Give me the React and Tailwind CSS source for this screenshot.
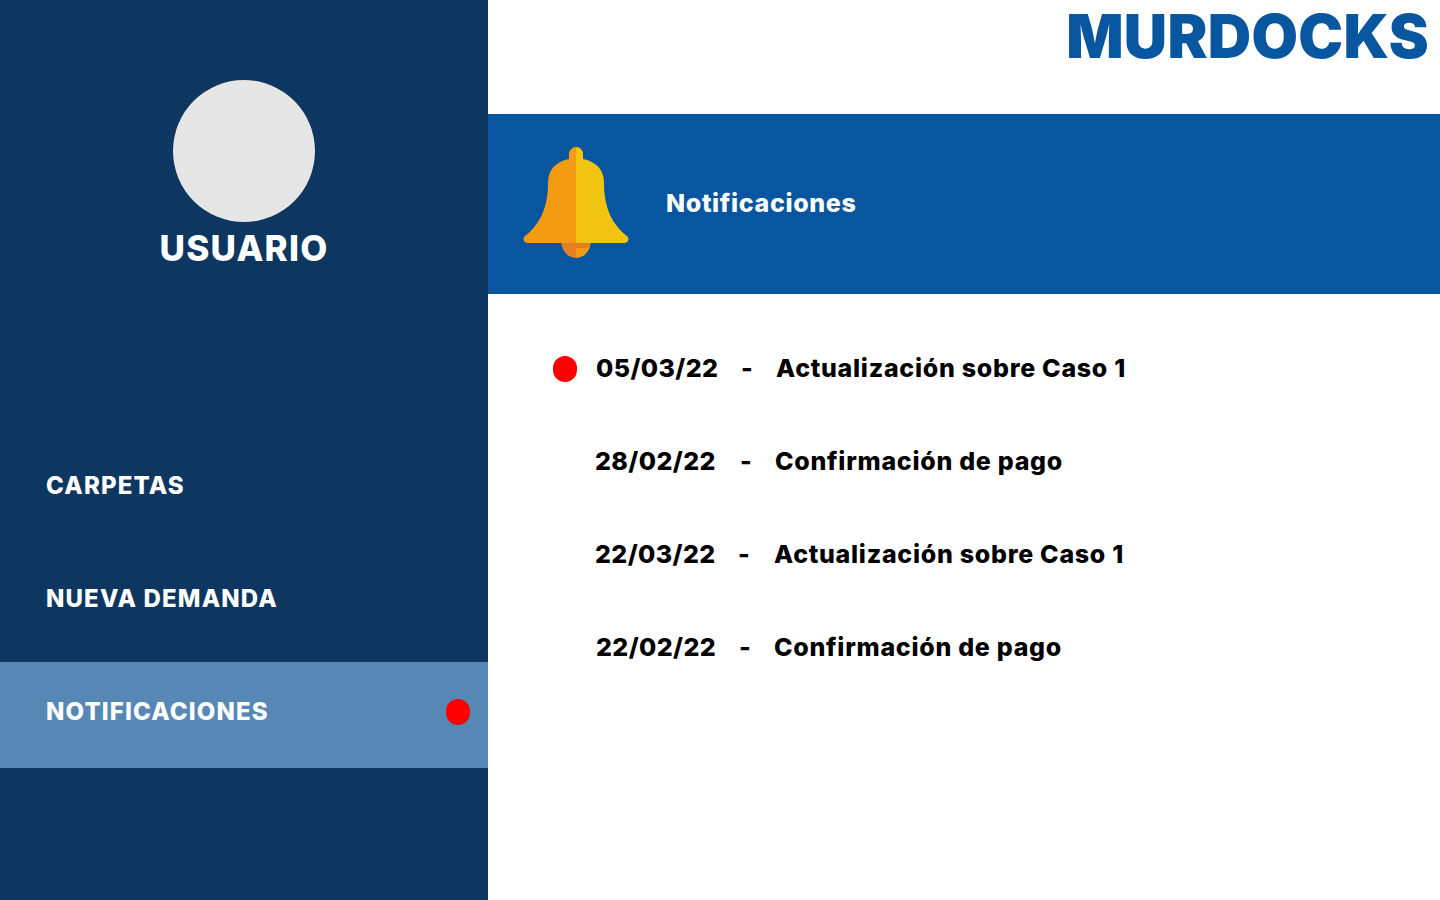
const menuItems = [
  { label: 'CARPETAS' },
  { label: 'NUEVA DEMANDA' },
  { label: 'NOTIFICACIONES', active: true, unread: true },
]

const notifications = [
  { date: '05/03/22', title: 'Actualización sobre Caso 1', unread: true, dotCol: 'w-[43px]', dateCol: 'w-[145px]', dashCol: 'w-[35px]' },
  { date: '28/02/22', title: 'Confirmación de pago', dotCol: 'w-[42px]', dateCol: 'w-[145px]', dashCol: 'w-[35px]' },
  { date: '22/03/22', title: 'Actualización sobre Caso 1', dotCol: 'w-[42px]', dateCol: 'w-[143px]', dashCol: 'w-[36px]' },
  { date: '22/02/22', title: 'Confirmación de pago', dotCol: 'w-[43px]', dateCol: 'w-[143px]', dashCol: 'w-[35px]' },
]

function Bell() {
  return (
    <svg width="106" height="112" viewBox="0 0 106 112" className="mb-[2px] shrink-0">
      <path d="M38 92 a15 18 0 0 0 15 19 V92 Z" fill="#e67e22" />
      <path d="M53 92 V111 a15 18 0 0 0 15 -19 Z" fill="#f39c12" />
      <rect x="53" y="94" width="14" height="7" fill="#e67e22" />
      <path d="M53 0 a7 7 0 0 0 -7 8 V12 C32 15 25 23 25 36 C25 62 16 78 2 89 C-1 92 1 96 5 96 H53 Z" fill="#f39c12" />
      <path d="M53 0 a7 7 0 0 1 7 8 V12 C74 15 81 23 81 36 C81 62 90 78 104 89 C107 92 105 96 101 96 H53 Z" fill="#f1c40f" />
    </svg>
  )
}

export default function App() {
  return (
    <div className="flex h-[900px] w-[1440px] overflow-hidden bg-white font-['Inter',sans-serif]">
      {/* Sidebar */}
      <aside className="flex w-[488px] shrink-0 flex-col bg-[#0d3660] text-white">
        <div className="flex flex-col items-center pt-[80px]">
          <div className="h-[142px] w-[142px] rounded-full bg-[#e6e6e6]" />
          <h1 className="mt-[6px] text-[35px] font-extrabold leading-[40px] tracking-[1.2px]">USUARIO</h1>
        </div>
        <nav className="mt-[168px] flex flex-col gap-[7px]">
          {menuItems.map((item) => (
            <div
              key={item.label}
              className={`flex h-[106px] items-center justify-between pb-[6px] pl-[46px] pr-[18px] text-[24px] font-extrabold tracking-[1.15px] ${item.active ? 'bg-[#5788b5]' : ''}`}
            >
              <span>{item.label}</span>
              {item.unread && <span className="h-[26px] w-[24px] rounded-full bg-[#ff0000]" />}
            </div>
          ))}
        </nav>
      </aside>

      {/* Main */}
      <main className="flex-1">
        <header className="flex h-[114px] justify-end pr-[11px]">
          <span className="text-[60px] font-black leading-[72px] tracking-[0.3px] text-[#07569f]">MURDOCKS</span>
        </header>
        <section className="flex h-[180px] items-center bg-[#07569f] pl-[35px] text-white">
          <Bell />
          <h2 className="ml-[37px] text-[25px] font-extrabold tracking-[0.65px]">Notificaciones</h2>
        </section>
        <ul className="flex flex-col gap-[63px] pl-[65px] pt-[60px]">
          {notifications.map((n) => (
            <li key={n.date} className="flex h-[30px] items-center text-[25px] font-extrabold text-black">
              <span className={`flex shrink-0 ${n.dotCol}`}>
                {n.unread && <span className="h-[26px] w-[24px] rounded-full bg-[#ff0000]" />}
              </span>
              <span className={`whitespace-nowrap tracking-[0.4px] ${n.dateCol}`}>{n.date}</span>
              <span className={n.dashCol}>-</span>
              <span className="whitespace-nowrap tracking-[0.72px]">{n.title}</span>
            </li>
          ))}
        </ul>
      </main>
    </div>
  )
}
